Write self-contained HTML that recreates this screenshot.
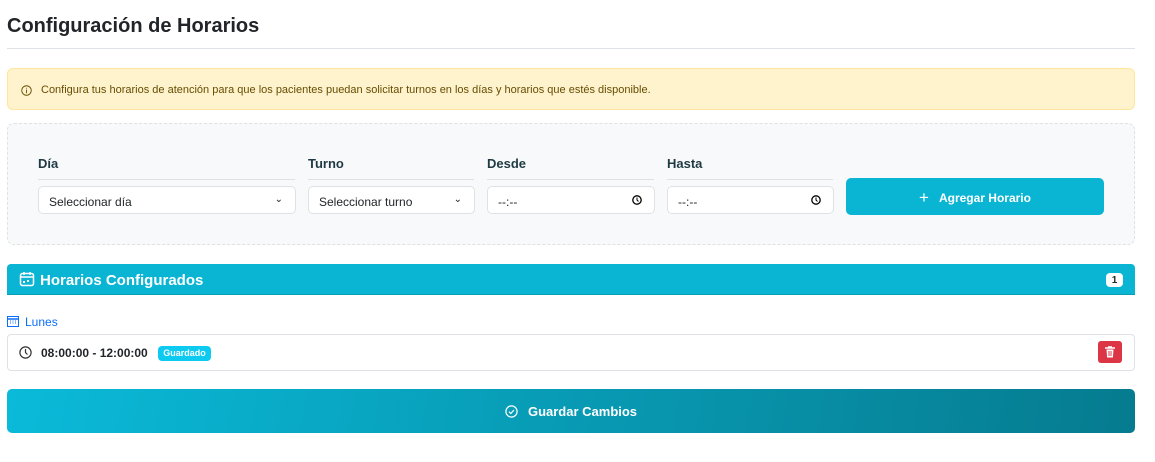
<!DOCTYPE html><html><head><style>
body{margin:0;width:1155px;height:462px;background:#fff;font-family:"Liberation Sans",sans-serif;position:relative;overflow:hidden;color:#212529}
.a{position:absolute}
.lab{position:absolute;top:156px;font-size:13px;font-weight:bold;color:#1f3a44;border-bottom:1px solid #dee2e6;padding-bottom:8px}
.inp{position:absolute;top:186px;height:28px;background:#fff;border:1px solid #dee2e6;border-radius:5px;box-sizing:border-box;font-size:12px;line-height:30px;padding-left:10px;color:#212529}
</style></head><body>
<div class="a" style="left:7px;top:15px;font-size:20px;font-weight:bold;color:#212529">Configuración de Horarios</div>
<div class="a" style="left:7px;top:48px;width:1128px;height:1px;background:#dee2e6"></div>
<div class="a" style="left:7px;top:68px;width:1128px;height:42px;box-sizing:border-box;background:#fff3cd;border:1px solid #ffe69c;border-radius:6px;font-size:11px;color:#664d03;line-height:42px;padding-left:33px">Configura tus horarios de atención para que los pacientes puedan solicitar turnos en los días y horarios que estés disponible.
<svg class="a" style="left:13px;top:16px" width="11" height="11" viewBox="0 0 12 12"><circle cx="6" cy="6" r="5.2" fill="none" stroke="#664d03" stroke-width="1"/><path d="M6 5v4M6 3v1" stroke="#664d03"/></svg></div>
<div class="a" style="left:7px;top:123px;width:1128px;height:122px;box-sizing:border-box;background:#f8f9fa;border:1px dashed #dee2e6;border-radius:7px"></div>
<div class="lab" style="left:38px;width:257px">Día</div>
<div class="lab" style="left:308px;width:166px">Turno</div>
<div class="lab" style="left:487px;width:167px">Desde</div>
<div class="lab" style="left:667px;width:166px">Hasta</div>
<div class="inp" style="left:38px;width:258px">Seleccionar día<span class="a" style="right:12px;top:-2px;font-size:10px">&#8964;</span></div>
<div class="inp" style="left:308px;width:167px">Seleccionar turno<span class="a" style="right:12px;top:-2px;font-size:10px">&#8964;</span></div>
<div class="inp" style="left:487px;width:168px">--:--<svg class="a" style="right:12px;top:8px" width="10" height="10" viewBox="0 0 10 10"><circle cx="5" cy="5" r="4.2" fill="none" stroke="#000" stroke-width="1.3"/><path d="M5 2.5V5l1.5 1.5" fill="none" stroke="#000"/></svg></div>
<div class="inp" style="left:667px;width:167px">--:--<svg class="a" style="right:12px;top:8px" width="10" height="10" viewBox="0 0 10 10"><circle cx="5" cy="5" r="4.2" fill="none" stroke="#000" stroke-width="1.3"/><path d="M5 2.5V5l1.5 1.5" fill="none" stroke="#000"/></svg></div>
<div class="a" style="left:846px;top:178px;width:258px;height:37px;background:#0ab5d4;border-radius:5px;color:#fff;font-size:12px;font-weight:bold;text-align:center;line-height:39px"><span style="font-size:17px;font-weight:normal;vertical-align:-1px;margin-right:10px">+</span>Agregar Horario</div>
<div class="a" style="left:7px;top:264px;width:1128px;height:31px;background:#0ab5d4;border-bottom:1px solid #0a9bb5;border-radius:4px 4px 0 0;box-sizing:border-box"></div>
<svg class="a" style="left:19px;top:271px" width="16" height="16" viewBox="0 0 16 16"><rect x="1.5" y="2.5" width="13" height="12" rx="2" fill="none" stroke="#fff" stroke-width="1.5"/><path d="M1.5 6h13M5 1v3M11 1v3" stroke="#fff" stroke-width="1.5"/><rect x="4" y="10" width="2" height="2" fill="#fff"/><rect x="8" y="9" width="2" height="2" fill="#fff"/></svg>
<div class="a" style="left:40px;top:272px;font-size:15px;font-weight:bold;color:#fff">Horarios Configurados</div>
<div class="a" style="left:1106px;top:273px;width:17px;height:14px;background:#fff;border-radius:4px;font-size:10px;font-weight:bold;text-align:center;line-height:15px">1</div>
<svg class="a" style="left:7px;top:315px" width="12" height="12" viewBox="0 0 12 12"><rect x=".5" y="1.5" width="11" height="10" fill="none" stroke="#0d6efd"/><path d="M.5 4h11" stroke="#0d6efd" stroke-width="1.5"/><path d="M3 6h1M5.5 6h1M8 6h1M3 8h1M5.5 8h1M8 8h1" stroke="#0d6efd"/></svg>
<div class="a" style="left:25px;top:315px;font-size:12px;color:#0d6efd">Lunes</div>
<div class="a" style="left:7px;top:334px;width:1128px;height:37px;box-sizing:border-box;border:1px solid #dee2e6;border-radius:4px"></div>
<svg class="a" style="left:19px;top:346px" width="13" height="13" viewBox="0 0 13 13"><circle cx="6.5" cy="6.5" r="5.6" fill="none" stroke="#333" stroke-width="1.2"/><path d="M6.5 3v3.5l2 2" fill="none" stroke="#333" stroke-width="1.2"/></svg>
<div class="a" style="left:41px;top:346px;font-size:12px;font-weight:bold">08:00:00 - 12:00:00</div>
<div class="a" style="left:158px;top:346px;width:53px;height:15px;background:#0dcaf0;border-radius:4px;color:#fff;font-size:9px;font-weight:bold;text-align:center;line-height:15px">Guardado</div>
<div class="a" style="left:1098px;top:341px;width:24px;height:22px;background:#dc3545;border-radius:3px"><svg class="a" style="left:7px;top:5px" width="10" height="12" viewBox="0 0 10 12"><path d="M0 2h10M3 1h4" stroke="#fff" stroke-width="1.5"/><path d="M1.5 3.5h7l-.6 8h-5.8z" fill="#fff"/><path d="M4 5v5M6 5v5" stroke="#dc3545"/></svg></div>
<div class="a" style="left:7px;top:389px;width:1128px;height:44px;border-radius:5px;background:linear-gradient(100deg,#0abad9,#067b8f);color:#fff;font-size:13px;font-weight:bold;text-align:center;line-height:45px"><svg style="vertical-align:-2px;margin-right:10px" width="13" height="13" viewBox="0 0 13 13"><circle cx="6.5" cy="6.5" r="5.6" fill="none" stroke="#fff" stroke-width="1.2"/><path d="M4 6.7l1.8 1.8L9 5" fill="none" stroke="#fff" stroke-width="1.2"/></svg>Guardar Cambios</div>
</body></html>
